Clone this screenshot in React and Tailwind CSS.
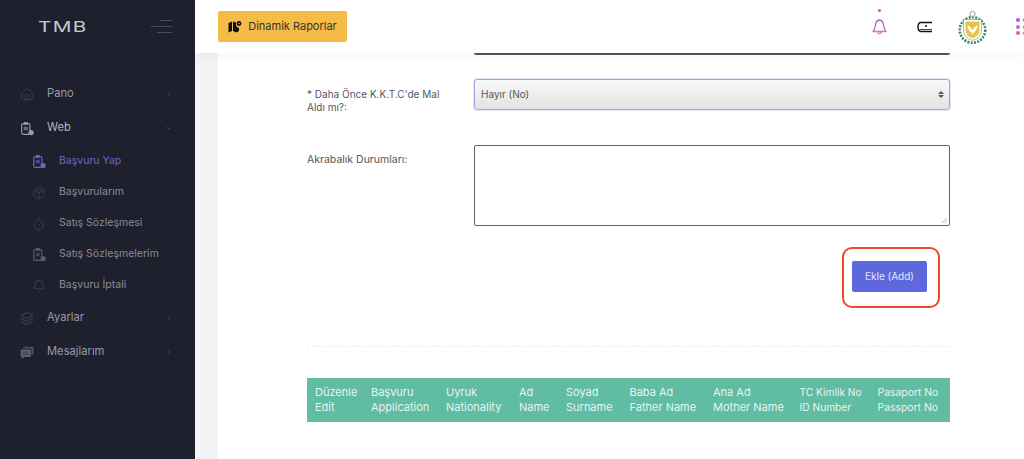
import React from 'react';
import { Home, ChevronRight, ChevronDown, Package, Timer, Bell, Layers } from 'lucide-react';

const font = { fontFamily: 'Inter' };

const ClipIcon = ({ className }) => (
  <svg viewBox="0 0 24 24" className={className} fill="none">
    <rect x="3" y="3.5" width="14" height="18.5" rx="2.5" stroke="currentColor" strokeWidth="2" />
    <rect x="6.5" y="1" width="7" height="4.5" rx="1" fill="currentColor" />
    <rect x="6.5" y="9" width="7" height="6" fill="currentColor" opacity="0.6" />
    <circle cx="19" cy="19" r="4.5" fill="currentColor" />
  </svg>
);

const MessageIcon = ({ className }) => (
  <svg viewBox="0 0 16 16" className={className}>
    <path d="M4 1.5H14Q15.5 1.5 15.5 3V9.5Q15.5 11 14 11H13V5Q13 3.5 11.5 3.5H3.5V2Q3.5 1.5 4 1.5Z" fill="currentColor" opacity="0.7" />
    <path d="M2 4.5H11Q12.3 4.5 12.3 6V11.5Q12.3 13 11 13H5L2.5 15.5V13H2Q0.7 13 0.7 11.5V6Q0.7 4.5 2 4.5Z" fill="currentColor" />
    <path d="M3 7.5H8M3 10H10" stroke="#1f202e" strokeWidth="0.7" />
  </svg>
);

const ReportIcon = () => (
  <svg viewBox="0 0 14 13" className="w-[14px] h-[13px]">
    <path d="M0.5 3L4 1.5V11L0.5 12.5Z" fill="#111" />
    <path d="M5 1.5L8 2.5V5.5Q9 7.5 11 8V11L8.5 12.5L5 11Z" fill="#111" />
    <circle cx="11" cy="3.5" r="2.4" fill="#111" />
    <circle cx="11" cy="3.5" r="0.8" fill="#f5bb47" />
  </svg>
);

const BellIcon = () => (
  <svg viewBox="0 0 15 16" className="w-[15px] h-[16px]">
    <defs>
      <linearGradient id="bellGrad" x1="0" y1="0" x2="0" y2="1">
        <stop offset="0" stopColor="#9b5de5" />
        <stop offset="1" stopColor="#ef6fa8" />
      </linearGradient>
    </defs>
    <path d="M7.5 1Q11 1.5 11.5 6Q11.7 10 14 12.5H1Q3.3 10 3.5 6Q4 1.5 7.5 1ZM5.5 12.8Q7.5 16.5 9.5 12.8" fill="none" stroke="url(#bellGrad)" strokeWidth="1.3" strokeLinejoin="round" />
  </svg>
);

const Emblem = () => (
  <svg viewBox="0 0 31 34" className="w-[31px] h-[34px]">
    <circle cx="15.5" cy="20" r="12.8" fill="none" stroke="#3f8a5e" strokeWidth="2.6" strokeDasharray="2 1.3" />
    <circle cx="15.5" cy="4" r="2.6" fill="#fff" stroke="#9a9a9a" strokeWidth="1" />
    <path d="M6.5 9.5 H24.5 V20 Q24.5 27.5 15.5 30.5 Q6.5 27.5 6.5 20 Z" fill="#fff" stroke="#6f8f6a" strokeWidth="0.6" />
    <path d="M8.5 11.5 H22.5 V20 Q22.5 26 15.5 28.5 Q8.5 26 8.5 20 Z" fill="#e8c24a" />
    <path d="M10.5 15 Q14 17 15.5 20 Q17 17 20.5 15 Q20 21 16.5 22.5 L15.5 25 L14.5 22.5 Q11 21 10.5 15 Z" fill="#fff" />
  </svg>
);

const topItem = (label, icon, open, active) => (
  <div className={`flex items-center h-[34px] pl-[20px] pr-[22px] ${active ? 'text-[#b4b4be]' : 'text-[#9a9aa6]'}`}>
    <div className="w-[14px] flex justify-center">{icon}</div>
    <span className="ml-[13px] flex-1 text-[11.2px] leading-none">{label}</span>
    {open ? <ChevronDown size={8} className="text-[#5c5d6c]" strokeWidth={1.5} /> : <ChevronRight size={8} className="text-[#5c5d6c]" strokeWidth={1.5} />}
  </div>
);

const subItems = [
  { name: 'Başvuru Yap', icon: <ClipIcon className="w-[14px] h-[15px] text-[#6c63c8]" />, active: true },
  { name: 'Başvurularım', icon: <Package size={14} strokeWidth={1} className="text-[#4a4b5a]" /> },
  { name: 'Satış Sözleşmesi', icon: <Timer size={14} strokeWidth={1} className="text-[#50515f]" /> },
  { name: 'Satış Sözleşmelerim', icon: <ClipIcon className="w-[14px] h-[15px] text-[#5a5b6b]" /> },
  { name: 'Başvuru İptali', icon: <Bell size={14} strokeWidth={1} className="text-[#50515f]" /> },
];

const columns = [
  ['Düzenle', 'Edit', 'w-[56px]'],
  ['Başvuru', 'Application', 'w-[75px]'],
  ['Uyruk', 'Nationality', 'w-[73px]'],
  ['Ad', 'Name', 'w-[47px]'],
  ['Soyad', 'Surname', 'w-[63.5px]'],
  ['Baba Ad', 'Father Name', 'w-[83.5px]'],
  ['Ana Ad', 'Mother Name', 'w-[86.5px]'],
  ['TC Kimlik No', 'ID Number', 'w-[78px] text-[10.2px]'],
  ['Pasaport No', 'Passport No', 'flex-1 text-[10.4px]'],
];

export default function App() {
  return (
    <div className="flex h-[459px] w-[1024px] overflow-hidden bg-white" style={font}>
      {/* Sidebar */}
      <aside className="w-[195px] shrink-0 bg-[#1f202e] flex flex-col">
        <div className="h-[53px] flex items-center pl-[38px] pr-[23px] justify-between">
          <span className="text-[#c9cad1] text-[15px] font-normal tracking-[1px] leading-none scale-x-[1.38] origin-left">TMB</span>
          <div className="flex flex-col items-end gap-[5px]">
            <div className="h-px w-[12px] bg-[#4b4c5a]" />
            <div className="h-px w-[21px] bg-[#4b4c5a]" />
            <div className="h-px w-[15px] bg-[#4b4c5a]" />
          </div>
        </div>
        <nav className="mt-[24px] flex flex-col">
          {topItem('Pano', <Home size={15} strokeWidth={1} className="text-[#4f5060]" />)}
          {topItem('Web', <ClipIcon className="w-[14px] h-[15px] text-[#9a9aa6]" />, true, true)}
          <div className="flex flex-col mt-[1px]">
            {subItems.map((item) => (
              <div key={item.name} className="flex items-center h-[31px] pl-[32px]">
                {item.icon}
                <span className={`ml-[13px] text-[10.5px] leading-none ${item.active ? 'text-[#6c63c8]' : 'text-[#8a8a96]'}`}>{item.name}</span>
              </div>
            ))}
          </div>
          {topItem('Ayarlar', <Layers size={15} strokeWidth={1} className="text-[#5a5b6b]" />)}
          {topItem('Mesajlarım', <MessageIcon className="w-[15px] h-[15px] text-[#5f6072]" />)}
        </nav>
      </aside>

      <div className="flex-1 flex flex-col min-w-0">
        {/* Header */}
        <header className="h-[53px] shrink-0 bg-white flex items-center pl-[23px] relative z-10 shadow-[0_4px_12px_rgba(0,0,0,0.04)]">
          <button className="h-[31px] w-[129px] bg-[#f5bb47] rounded-[2px] flex items-center justify-center gap-[6px] text-[#333] text-[11px]">
            <ReportIcon />
            Dinamik Raporlar
          </button>
          <div className="ml-auto flex items-center">
            <div className="relative mr-[30px] mt-[1px]">
              <div className="absolute -top-[10px] left-[6px] w-[3px] h-[3px] rounded-full bg-[#e8506e]" />
              <BellIcon />
            </div>
            <svg viewBox="0 0 16 12" className="w-[16px] h-[12px] mr-[24px]">
              <path d="M15 1.5H4Q1 1.5 1 6T4 10.5H15" fill="none" stroke="#111" strokeWidth="1.4" />
              <path d="M2.5 8.5H15" stroke="#111" strokeWidth="0.8" />
              <circle cx="9" cy="5" r="1" fill="#111" />
            </svg>
            <Emblem />
            <div className="ml-[28px] w-[8px] overflow-hidden">
              <div className="w-[11px] grid grid-cols-2 gap-[2.5px]">
                <div className="w-[4px] h-[4px] rounded-full bg-[#a855f7]" />
                <div className="w-[4px] h-[4px] rounded-full bg-[#a855f7]" />
                <div className="w-[4px] h-[4px] rounded-full bg-[#c665c8]" />
                <div className="w-[4px] h-[4px] rounded-full bg-[#c665c8]" />
                <div className="w-[4px] h-[4px] rounded-full bg-[#e0609a]" />
                <div className="w-[4px] h-[4px] rounded-full bg-[#e0609a]" />
              </div>
            </div>
          </div>
        </header>

        {/* Main */}
        <main className="flex-1 bg-[#f3f4f8] pl-[23px] overflow-hidden">
          <div className="h-full bg-white pl-[89px] pr-[74px]">
            <div className="ml-[167px] h-[2px] border-b-2 border-x border-[#555] rounded-b-[2px]" />

            <div className="flex mt-[24px]">
              <label className="w-[167px] pr-[25px] pt-[9px] text-[10px] leading-[13px] text-[#55565f]">* Daha Önce K.K.T.C'de Mal Aldı mı?:</label>
              <div className="flex-1 h-[31px] rounded-[3px] border border-[#a9a4e0] shadow-[0_0_0_1px_rgba(169,164,224,0.3)] bg-gradient-to-b from-[#f9f9f9] to-[#e2e2e2] flex items-center pl-[6px] pr-[5px] justify-between">
                <span className="text-[10px] text-[#55565f]">Hayır (No)</span>
                <div className="flex flex-col gap-[1px]">
                  <div className="w-0 h-0 border-x-[3px] border-x-transparent border-b-[3.5px] border-b-[#555]" />
                  <div className="w-0 h-0 border-x-[3px] border-x-transparent border-t-[3.5px] border-t-[#555]" />
                </div>
              </div>
            </div>

            <div className="flex mt-[31px]">
              <label className="w-[167px] pt-[8px] text-[10.5px] leading-[13px] text-[#55565f]">Akrabalık Durumları:</label>
              <div className="relative flex-1 h-[81px] rounded-[2px] border border-[#666] bg-white">
                <svg viewBox="0 0 8 8" className="absolute right-[1px] bottom-[1px] w-[7px] h-[7px]">
                  <path d="M1 7L7 1M4 7L7 4" stroke="#999" strokeWidth="0.8" />
                </svg>
              </div>
            </div>

            <div className="flex justify-end mt-[21px] mr-[10px]">
              <div className="w-[98px] h-[61px] rounded-[10px] border-2 border-[#ee4b2b] flex items-center justify-center pr-[3px] pb-[2px]">
                <button className="w-[75px] h-[31px] bg-[#5c68db] rounded-[2px] text-[10px] text-[#e4e6fb]">Ekle (Add)</button>
              </div>
            </div>

            <div className="mt-[38px] border-t border-dashed border-[#eeeef2]" />

            <div className="mt-[31px] h-[44px] bg-[#60bca2] flex items-center pl-[8px] text-[#e6f5f0] text-[11px] leading-[15px]">
              {columns.map(([tr, en, w]) => (
                <div key={en} className={`${w} whitespace-nowrap`}>
                  <div>{tr}</div>
                  <div>{en}</div>
                </div>
              ))}
            </div>
          </div>
        </main>
      </div>
    </div>
  );
}
